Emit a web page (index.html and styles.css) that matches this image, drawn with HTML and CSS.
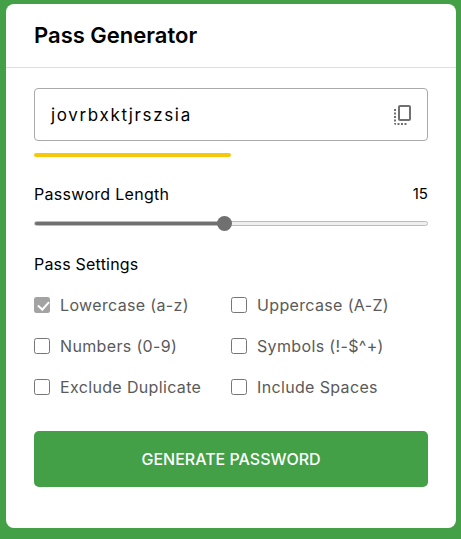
FILE: index.html
```html
<!DOCTYPE html>
<html lang="en">

<head>
  <meta charset="UTF-8">
  <meta name="viewport" content="width=device-width, initial-scale=1.0">
  <title>Pass Generator</title>
  <link rel="stylesheet" href="styles.css">
</head>

<body>
  <div class="container">
    <h2 class="title">Pass Generator</h2>
    <div class="wrapper">
      <div class="inputBox">
        <span class="passText">jovrbxktjrszsia</span>
        <svg class="copyIcon" viewBox="0 0 24 24" width="24" height="24">
          <path d="M18,2H9C7.9,2,7,2.9,7,4v12c0,1.1,0.9,2,2,2h9c1.1,0,2-0.9,2-2V4C20,2.9,19.1,2,18,2z M18,16H9V4h9V16z M3,15v-2h2v2H3z M3,9.5h2v2H3V9.5z M10,20h2v2h-2V20z M3,18.5v-2h2v2H3z M5,22c-1.1,0-2-0.9-2-2h2V22z M8.5,22h-2v-2h2V22z M13.5,22L13.5,20l2,0v2L13.5,22z M3,6l2,0v2l-2,0V6z"/>
        </svg>
      </div>
      <div class="strength"></div>

      <div class="lengthRow">
        <span>Password Length</span>
        <span class="lengthValue">15</span>
      </div>
      <input class="slider" type="range" min="1" max="30" value="15" title="Password length">

      <div class="settingsTitle">Pass Settings</div>
      <ul class="options">
        <li><label><input type="checkbox" checked> Lowercase (a-z)</label></li>
        <li><label><input type="checkbox"> Uppercase (A-Z)</label></li>
        <li><label><input type="checkbox"> Numbers (0-9)</label></li>
        <li><label><input type="checkbox"> Symbols (!-$^+)</label></li>
        <li><label><input type="checkbox"> Exclude Duplicate</label></li>
        <li><label><input type="checkbox"> Include Spaces</label></li>
      </ul>

      <button class="genButton">GENERATE PASSWORD</button>
    </div>
  </div>
</body>

</html>
```
FILE: styles.css
```css
* {
  box-sizing: border-box;
}

body {
  margin: 0;
  padding: 4px 5px 11px 6px;
  background-color: #43a047;
  font-family: Inter, "Noto Sans", sans-serif;
  color: #000;
}

.container {
  height: 524px;
  background: #fff;
  border-radius: 8px;
}

.title {
  margin: 0;
  height: 64px;
  padding: 0 28px 1px;
  display: flex;
  align-items: center;
  font-size: 22px;
  font-weight: 600;
  border-bottom: 1px solid #dddde3;
}

.wrapper {
  padding: 20px 28px;
}

.inputBox {
  height: 53px;
  padding: 0 12px 0 16px;
  display: flex;
  align-items: center;
  justify-content: space-between;
  border: 1px solid #aaa;
  border-radius: 4px;
}

.passText {
  font-size: 17px;
  letter-spacing: 1.65px;
}

.copyIcon {
  fill: #707070;
}

.strength {
  width: 197px;
  height: 4px;
  margin-top: 12px;
  background: #f5c909;
  border-radius: 2px;
}

.lengthRow {
  display: flex;
  justify-content: space-between;
  margin-top: 26px;
  font-size: 16px;
  letter-spacing: 0.3px;
  line-height: 22px;
}

.lengthValue {
  font-size: 15px;
  letter-spacing: 0;
}

.slider {
  display: block;
  width: 100%;
  height: 16px;
  margin: 10px 0 0;
  appearance: none;
  background: transparent;
}

.slider::-webkit-slider-runnable-track {
  height: 5px;
  border-radius: 3px;
  border: 1px solid #bbb;
  background: linear-gradient(to right, #707070 49%, #efefef 49%);
}

.slider::-webkit-slider-thumb {
  appearance: none;
  width: 15px;
  height: 15px;
  margin-top: -6px;
  border-radius: 50%;
  background: #707070;
}

.settingsTitle {
  margin-top: 22px;
  font-size: 16px;
  letter-spacing: 0.2px;
  line-height: 22px;
}

.options {
  list-style: none;
  margin: 19px 0 0;
  padding: 0;
  display: grid;
  grid-template-columns: 197px 1fr;
  row-gap: 19px;
}

.options label {
  display: flex;
  align-items: center;
  gap: 10px;
  height: 22px;
  font-size: 16px;
  letter-spacing: 0.35px;
  color: #5a5a5a;
}

.options input {
  position: relative;
  width: 16px;
  height: 16px;
  margin: 0;
  appearance: none;
  border: 1px solid #767676;
  border-radius: 2.5px;
  background: #fff;
}

.options input:checked {
  border: none;
  background: #a3a3a3;
}

.options input:checked::after {
  content: "";
  position: absolute;
  left: 5.5px;
  top: 2px;
  width: 5px;
  height: 9px;
  border: solid #fff;
  border-width: 0 2px 2px 0;
  transform: rotate(42deg);
}

.genButton {
  display: block;
  width: 100%;
  height: 56px;
  margin-top: 33px;
  border: none;
  border-radius: 5px;
  background-color: #43a047;
  color: #fff;
  font-family: inherit;
  font-size: 16px;
  font-weight: 500;
}
```
